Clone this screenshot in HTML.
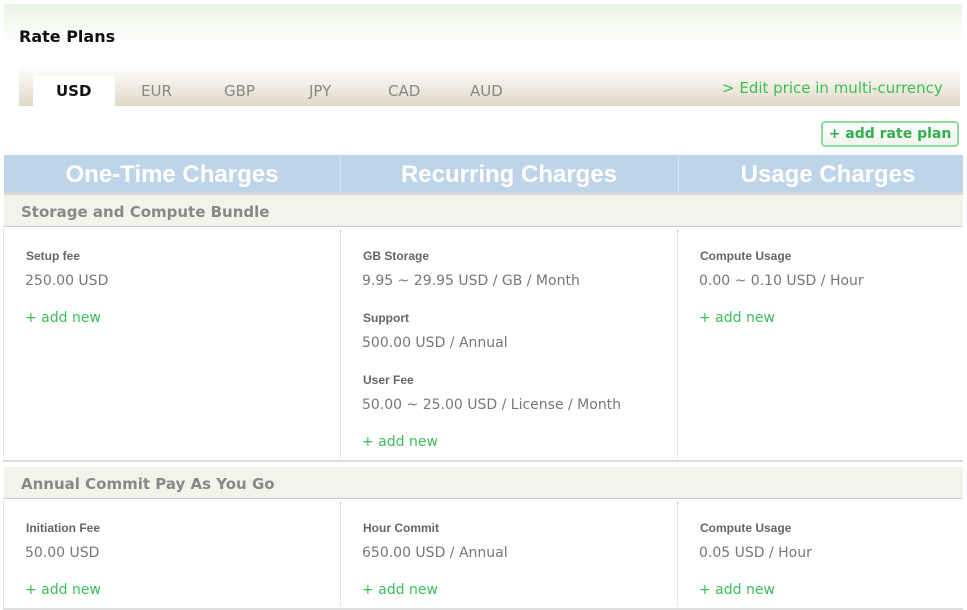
<!DOCTYPE html>
<html><head><meta charset="utf-8"><style>
*{margin:0;padding:0;box-sizing:border-box}
body{width:967px;height:610px;background:#fff;position:relative;overflow:hidden;font-family:"DejaVu Sans","Liberation Sans",sans-serif}
.a{position:absolute;white-space:nowrap}
.lbl{font:bold 12px "Liberation Sans",sans-serif;color:#666}
.val{font-size:14px;color:#777}
.add{font-size:14px;color:#3dbd5a}
.bh{font:bold 24px "Liberation Sans",sans-serif;color:#fff;text-align:center;top:161px}
.sec{font-weight:bold;font-size:15px;color:#888}
.tab{font-size:15px;color:#888;top:82px}
</style></head><body>
<div class="a" style="left:4px;top:4px;width:958px;height:106px;background:linear-gradient(#eaf5e4,#fff 40px);"></div>
<div class="a" style="left:19px;top:27px;font:bold 16px 'DejaVu Sans',sans-serif;color:#111">Rate Plans</div>
<div class="a" style="left:19px;top:66px;width:941px;height:40px;background:linear-gradient(#fff,#f1ede2 20px,#e1d9c6)"></div>
<div class="a" style="left:33px;top:76px;width:82px;height:34px;background:#fff;border-radius:3px 3px 0 0"></div>
<div class="a" style="left:56px;top:82px;font-weight:bold;font-size:15px;color:#111">USD</div>
<div class="a tab" style="left:141px">EUR</div>
<div class="a tab" style="left:224px">GBP</div>
<div class="a tab" style="left:309px">JPY</div>
<div class="a tab" style="left:388px">CAD</div>
<div class="a tab" style="left:470px">AUD</div>
<div class="a" style="left:722px;top:79px;font-size:15px;color:#3dbd5a">&gt; Edit price in multi-currency</div>
<div class="a" style="left:821px;top:121px;width:138px;height:26px;border:2px solid #8fdca0;border-radius:4px;background:linear-gradient(#fff,#f3f3ee);font-weight:bold;font-size:14px;color:#2fb04c;text-align:center;line-height:22px">+ add rate plan</div>
<div class="a" style="left:4px;top:155px;width:959px;height:37px;background:#bed5e9"></div>
<div class="a" style="left:340px;top:155px;width:1px;height:37px;background:#d4e3f0"></div>
<div class="a" style="left:678px;top:155px;width:1px;height:37px;background:#d4e3f0"></div>
<div class="a bh" style="left:4px;width:336px">One-Time Charges</div>
<div class="a bh" style="left:340px;width:338px">Recurring Charges</div>
<div class="a bh" style="left:678px;width:300px">Usage Charges</div>
<div class="a" style="left:4px;top:192px;width:959px;height:3px;background:#d8d8d8"></div>
<!-- section 1 -->
<div class="a" style="left:4px;top:195px;width:959px;height:32px;background:#f3f3eb;border-bottom:1px solid #ccc"></div>
<div class="a sec" style="left:21px;top:203px">Storage and Compute Bundle</div>
<div class="a" style="left:3px;top:227px;width:960px;height:235px;border-left:1px dotted #ccc;border-bottom:2px solid #ddd"></div>
<div class="a" style="left:340px;top:230px;height:228px;border-left:1px dotted #ccc"></div>
<div class="a" style="left:677px;top:230px;height:228px;border-left:1px dotted #ccc"></div>
<div class="a lbl" style="left:26px;top:249px">Setup fee</div>
<div class="a val" style="left:25px;top:273px">250.00 USD</div>
<div class="a add" style="left:25px;top:310px">+ add new</div>
<div class="a lbl" style="left:363px;top:249px">GB Storage</div>
<div class="a val" style="left:362px;top:273px">9.95 ~ 29.95 USD / GB / Month</div>
<div class="a lbl" style="left:363px;top:311px">Support</div>
<div class="a val" style="left:362px;top:335px">500.00 USD / Annual</div>
<div class="a lbl" style="left:363px;top:373px">User Fee</div>
<div class="a val" style="left:362px;top:397px">50.00 ~ 25.00 USD / License / Month</div>
<div class="a add" style="left:362px;top:434px">+ add new</div>
<div class="a lbl" style="left:700px;top:249px">Compute Usage</div>
<div class="a val" style="left:699px;top:273px">0.00 ~ 0.10 USD / Hour</div>
<div class="a add" style="left:699px;top:310px">+ add new</div>
<!-- section 2 -->
<div class="a" style="left:4px;top:467px;width:959px;height:32px;background:#f3f3eb;border-bottom:1px solid #ccc"></div>
<div class="a sec" style="left:21px;top:475px">Annual Commit Pay As You Go</div>
<div class="a" style="left:3px;top:499px;width:960px;height:111px;border-left:1px dotted #ccc;border-bottom:2px solid #ddd"></div>
<div class="a" style="left:340px;top:502px;height:104px;border-left:1px dotted #ccc"></div>
<div class="a" style="left:677px;top:502px;height:104px;border-left:1px dotted #ccc"></div>
<div class="a lbl" style="left:26px;top:521px">Initiation Fee</div>
<div class="a val" style="left:25px;top:545px">50.00 USD</div>
<div class="a add" style="left:25px;top:582px">+ add new</div>
<div class="a lbl" style="left:363px;top:521px">Hour Commit</div>
<div class="a val" style="left:362px;top:545px">650.00 USD / Annual</div>
<div class="a add" style="left:362px;top:582px">+ add new</div>
<div class="a lbl" style="left:700px;top:521px">Compute Usage</div>
<div class="a val" style="left:699px;top:545px">0.05 USD / Hour</div>
<div class="a add" style="left:699px;top:582px">+ add new</div>
</body></html>
